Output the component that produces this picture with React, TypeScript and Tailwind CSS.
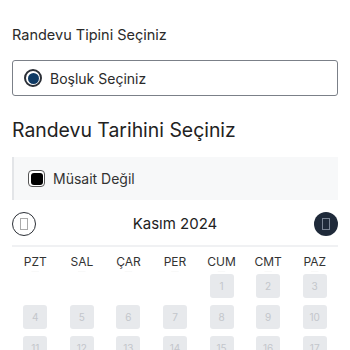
import React from 'react'

const days = ['PZT', 'SAL', 'ÇAR', 'PER', 'CUM', 'CMT', 'PAZ']

function Tofu({ stroke }: { stroke: string }) {
  return (
    <svg width="8" height="12" viewBox="0 0 8 12" fill="none">
      <rect x="0.5" y="0.5" width="7" height="11" stroke={stroke} strokeWidth="1" />
    </svg>
  )
}

export default function App() {
  const cells: (number | null)[] = [null, null, null, null, 1, 2, 3]
  for (let d = 4; d <= 30; d++) cells.push(d)

  return (
    <div
      className="w-[350px] h-[350px] overflow-hidden bg-white px-3 text-[#222]"
      style={{ fontFamily: 'Inter, "Noto Sans", sans-serif' }}
    >
      <div className="pt-[25px] text-[14.5px] leading-5 text-[#2a2a2a]">Randevu Tipini Seçiniz</div>

      <div className="mt-[15px] h-[36px] rounded-[3px] border border-[#7b8088] flex items-center pl-[11px]">
        <span className="w-[18px] h-[18px] rounded-full border-2 border-[#2b2f36] flex items-center justify-center">
          <span className="w-[11px] h-[11px] rounded-full bg-[#0f3a64]" />
        </span>
        <span className="ml-[8px] text-[14px] text-[#2a2a2a]">Boşluk Seçiniz</span>
      </div>

      <div className="mt-[20px] text-[19.4px] leading-7 text-[#222]">Randevu Tarihini Seçiniz</div>

      <div className="mt-[13px] h-[43px] bg-[#f7f8f9] border-l-2 border-[#e3e5e8] flex items-center pl-[14px]">
        <span className="w-[17px] h-[17px] rounded-[4px] border border-[#555] bg-white p-[1.5px] flex">
          <span className="flex-1 rounded-[3px] bg-black" />
        </span>
        <span className="ml-[8px] text-[14px] text-[#333]">Müsait Değil</span>
      </div>

      <div className="mt-[12px] h-[24px] flex items-center justify-between">
        <span className="w-[24px] h-[24px] rounded-full border-[1.5px] border-[#2b2f36] bg-white flex items-center justify-center">
          <Tofu stroke="#aaa" />
        </span>
        <span className="text-[15px] text-[#222]">Kasım 2024</span>
        <span className="w-[24px] h-[24px] rounded-full bg-[#1f2a3a] flex items-center justify-center">
          <Tofu stroke="#7a8494" />
        </span>
      </div>

      <div className="mt-[9px] h-[2px] bg-[#f0f1f3]" />

      <div className="grid grid-cols-7 mt-[7px]">
        {days.map((d) => (
          <div key={d} className="flex flex-col items-center">
            <span className="text-[12px] leading-4 text-[#333]">{d}</span>
            <span className="text-[4px] leading-[4px] text-[#e6e6e6] tracking-wide">······</span>
          </div>
        ))}
      </div>

      <div className="grid grid-cols-7 gap-y-[7px] mt-[0px]">
        {cells.map((c, i) => (
          <div key={i} className="flex justify-center">
            {c === null ? (
              <span className="w-[24px] h-[24px]" />
            ) : (
              <span className="w-[24px] h-[24px] rounded-[3px] bg-[#e7e9ec] text-[#c3c6cb] text-[10px] flex items-center justify-center">
                {c}
              </span>
            )}
          </div>
        ))}
      </div>
    </div>
  )
}
